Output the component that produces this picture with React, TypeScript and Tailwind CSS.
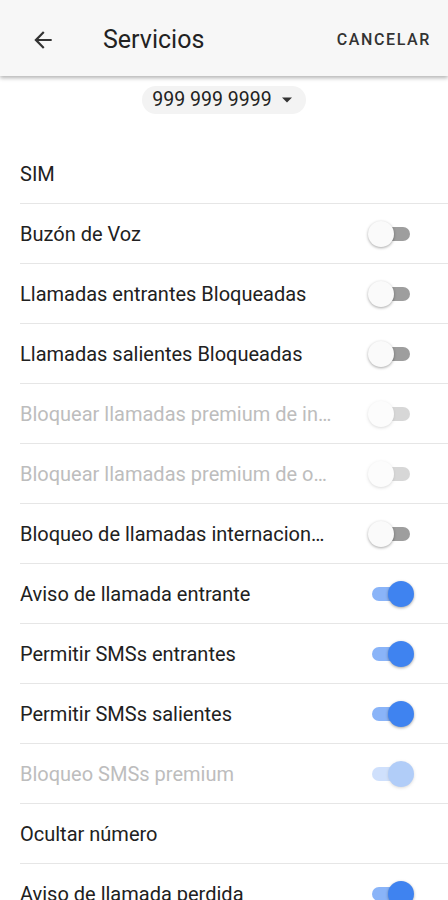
import { useState } from "react";

type Item = {
  label: string;
  toggle?: boolean;
  on?: boolean;
  disabled?: boolean;
};

const items: Item[] = [
  { label: "SIM" },
  { label: "Buzón de Voz", toggle: true, on: false },
  { label: "Llamadas entrantes Bloqueadas", toggle: true, on: false },
  { label: "Llamadas salientes Bloqueadas", toggle: true, on: false },
  { label: "Bloquear llamadas premium de internacionales", toggle: true, on: false, disabled: true },
  { label: "Bloquear llamadas premium de otros operadores", toggle: true, on: false, disabled: true },
  { label: "Bloqueo de llamadas internacionales", toggle: true, on: false },
  { label: "Aviso de llamada entrante", toggle: true, on: true },
  { label: "Permitir SMSs entrantes", toggle: true, on: true },
  { label: "Permitir SMSs salientes", toggle: true, on: true },
  { label: "Bloqueo SMSs premium", toggle: true, on: true, disabled: true },
  { label: "Ocultar número" },
  { label: "Aviso de llamada perdida", toggle: true, on: true },
];

function Toggle({ on, disabled }: { on: boolean; disabled?: boolean }) {
  return (
    <div className={`relative h-[26px] w-[46px] ${disabled ? "opacity-40" : ""}`}>
      <div
        className={`absolute left-[4px] top-[6px] h-[14px] w-[38px] rounded-full ${
          on ? "bg-[#8ab4f8]" : "bg-[#9e9e9e]"
        }`}
      />
      <div
        className={`absolute top-0 h-[26px] w-[26px] rounded-full shadow-[0_1px_3px_rgba(0,0,0,0.35)] ${
          on ? "right-0 bg-[#3f83f0]" : "left-0 bg-[#fafafa]"
        }`}
      />
    </div>
  );
}

function Row({ item }: { item: Item }) {
  const [on, setOn] = useState(!!item.on);
  return (
    <div className="ml-5 flex h-[60px] items-center border-b border-[#e6e6e6] pr-[34px]">
      <span
        className={`min-w-0 flex-1 truncate pr-[36px] text-[20px] ${
          item.disabled ? "text-[#bdbdbd]" : "text-[#212121]"
        }`}
      >
        {item.label}
      </span>
      {item.toggle && (
        <button onClick={() => !item.disabled && setOn(!on)} className="shrink-0">
          <Toggle on={on} disabled={item.disabled} />
        </button>
      )}
    </div>
  );
}

export default function App() {
  return (
    <div className="h-[900px] w-[448px] overflow-hidden bg-white font-['Roboto',sans-serif]">
      <header className="relative z-10 flex h-[76px] items-center bg-[#f7f7f7] pt-[4px] shadow-[0_2px_4px_rgba(0,0,0,0.3)]">
        <button className="ml-[30px] flex h-[26px] w-[26px] items-center justify-center text-[#333]">
          <svg width="26" height="26" viewBox="0 0 24 24" fill="currentColor">
            <path d="M20 11H7.83l5.59-5.59L12 4l-8 8 8 8 1.41-1.41L7.83 13H20v-2z" />
          </svg>
        </button>
        <h1 className="ml-[47px] flex-1 text-[25px] text-[#222]">Servicios</h1>
        <button className="mr-[17px] text-[16px] font-medium tracking-[1.6px] text-[#333]">CANCELAR</button>
      </header>

      <div className="flex justify-center pt-[10px]">
        <div className="flex h-[28px] items-center gap-[10px] rounded-full bg-[#f3f3f3] pl-[10px] pr-[14px] text-[19.5px] text-[#222]">
          <span>999 999 9999</span>
          <svg width="10" height="6" viewBox="0 0 10 5" fill="#333">
            <path d="M0 0l5 5 5-5z" />
          </svg>
        </div>
      </div>

      <div className="mt-[30px]">
        {items.map((it) => (
          <Row key={it.label} item={it} />
        ))}
      </div>
    </div>
  );
}
